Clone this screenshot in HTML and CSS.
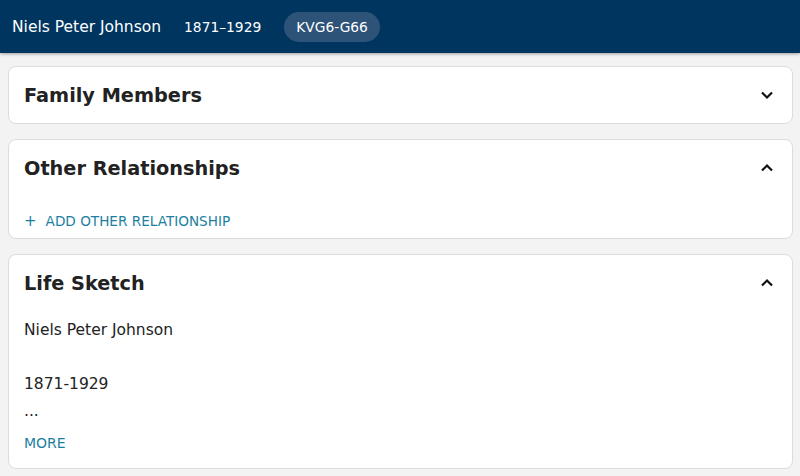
FILE: index.html
```html
<!DOCTYPE html>
<html lang="en">
<head>
	<meta charset="UTF-8">
	<title>Niels Peter Johnson</title>
	<link rel="stylesheet" href="styles.css">
</head>
<body>
	<div class="topbar">
		<span class="person_name">Niels Peter Johnson</span>
		<span class="person_dates">1871–1929</span>
		<span class="person_id">KVG6-G66</span>
	</div>

	<div class="cards">
		<div class="card">
			<div class="card_head">
				<h2>Family Members</h2>
				<svg class="chev" viewBox="0 0 14 14" width="14" height="14"><path d="M2 4.5 L7 9.5 L12 4.5" /></svg>
			</div>
		</div>

		<div class="card">
			<div class="card_head">
				<h2>Other Relationships</h2>
				<svg class="chev" viewBox="0 0 14 14" width="14" height="14"><path d="M2 9.5 L7 4.5 L12 9.5" /></svg>
			</div>
			<div class="card_body rel_body">
				<a class="link" href="#"><span class="plus">+</span>ADD OTHER RELATIONSHIP</a>
			</div>
		</div>

		<div class="card">
			<div class="card_head">
				<h2>Life Sketch</h2>
				<svg class="chev" viewBox="0 0 14 14" width="14" height="14"><path d="M2 9.5 L7 4.5 L12 9.5" /></svg>
			</div>
			<div class="card_body sketch_body">
				<div class="sketch_text">Niels Peter Johnson<br><br>1871-1929<br>...</div>
				<a class="link more" href="#">MORE</a>
			</div>
		</div>
	</div>
</body>
</html>
```

FILE: styles.css
```css
body {
	margin: 0;
	background: #f3f3f3;
	font-family: "DejaVu Sans", Verdana, sans-serif;
	color: #222;
}
.topbar {
	display: flex;
	align-items: center;
	height: 53px;
	padding: 0 12px;
	background: #00355f;
	color: #fff;
	box-shadow: 0 1px 3px rgba(0, 0, 0, 0.35);
}
.person_name {
	font-size: 15.5px;
}
.person_dates {
	margin-left: 23px;
	font-size: 13.8px;
}
.person_id {
	margin-left: 23px;
	padding: 0 12px;
	height: 30px;
	line-height: 30px;
	border-radius: 15px;
	background: #2d5378;
	font-size: 13.8px;
}
.cards {
	display: flex;
	flex-direction: column;
	gap: 15px;
	padding: 13px 7px 8px 8px;
}
.card {
	background: #fff;
	border: 1px solid #dcdcdc;
	border-radius: 8px;
}
.card_head {
	display: flex;
	align-items: center;
	justify-content: space-between;
	height: 56px;
	padding: 0 18px 0 15px;
}
.card_head h2 {
	margin: 0;
	font-size: 19.3px;
	font-weight: bold;
	color: #222;
}
.chev {
	fill: none;
	stroke: #111;
	stroke-width: 2.2;
}
.card_body {
	padding: 0 15px;
}
.rel_body {
	padding-top: 17px;
	padding-bottom: 8px;
}
.link {
	display: block;
	width: fit-content;
	color: #1c7fa0;
	text-decoration: none;
	font-size: 13.6px;
	line-height: 17px;
}
.plus {
	margin-right: 9px;
	font-size: 15px;
}
.sketch_body {
	padding-top: 6px;
	padding-bottom: 16px;
}
.sketch_text {
	font-size: 15.5px;
	line-height: 27px;
}
.more {
	margin-top: 10px;
	font-size: 14px;
}
```
